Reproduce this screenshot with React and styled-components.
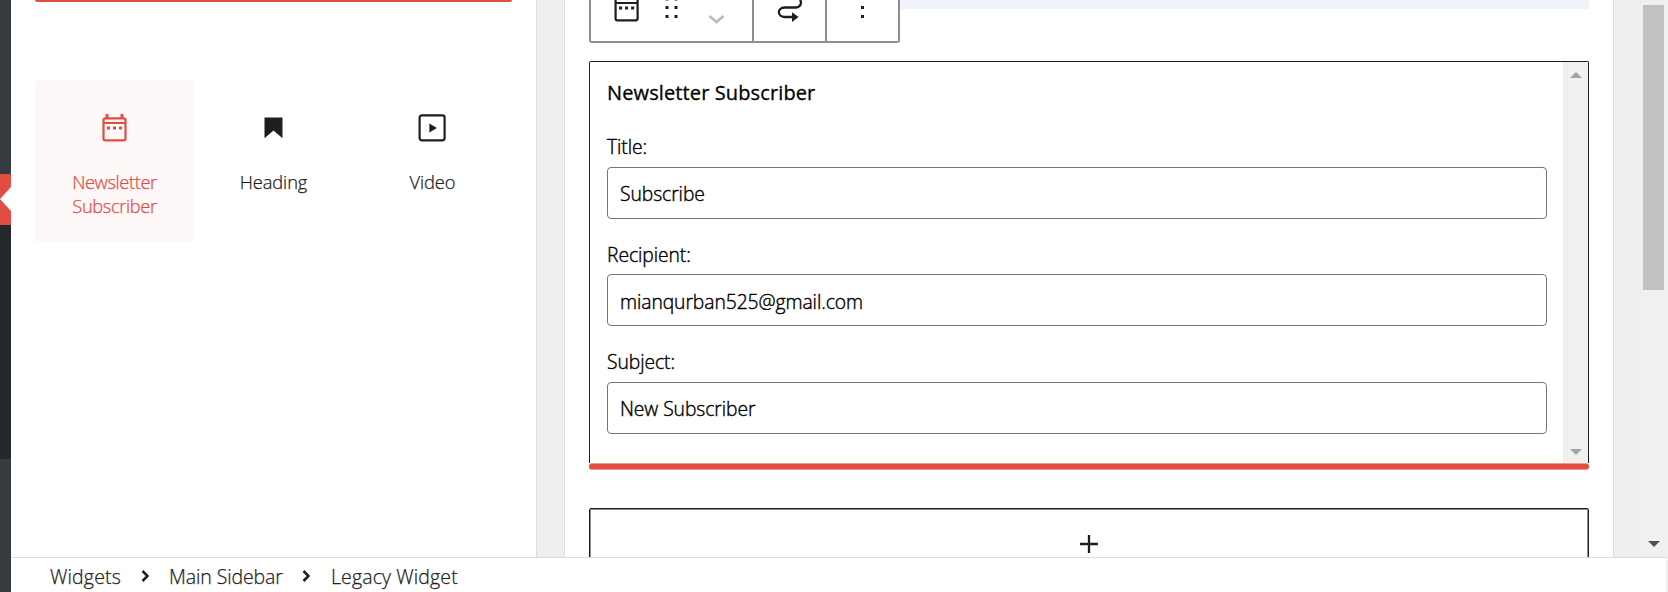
import React from "react";
import styled, { createGlobalStyle, ThemeProvider } from "styled-components";

const theme = {
  accent: "#e14d43",
  ink: "#1e1e1e",
  line: "#dddddd",
  canvas: "#efefef",
  track: "#f0f0f0",
};

const GlobalStyle = createGlobalStyle`
  *, *::before, *::after { box-sizing: border-box; }
  body {
    margin: 0;
    overflow: hidden;
    background: #fff;
    font-family: "Open Sans", "Noto Sans", sans-serif;
  }
  svg { display: block; flex: none; }
`;

const Page = styled.div`
  display: flex;
  width: 1668px;
  height: 592px;
  overflow: hidden;
  color: ${({ theme }) => theme.ink};
`;

const AdminRail = styled.nav`
  display: flex;
  flex-direction: column;
  flex: none;
  width: 11px;
  background: #363b3f;
`;

const RailCurrent = styled.div`
  display: flex;
  align-items: center;
  height: 51px;
  margin-top: 174px;
  background: ${({ theme }) => theme.accent};
`;

const RailNotch = styled.span`
  width: 0;
  height: 0;
  margin-top: -2px;
  border: 12px solid transparent;
  border-left: 0;
  border-right: 11px solid #fff;
`;

const RailSubmenu = styled.div`
  height: 234px;
  background: #25282b;
`;

const Shell = styled.div`
  display: flex;
  flex-direction: column;
  flex: 1;
  min-width: 0;
`;

const Workspace = styled.div`
  display: flex;
  height: 557px;
  overflow: hidden;
  background: ${({ theme }) => theme.canvas};
`;

const Inserter = styled.aside`
  flex: none;
  width: 526px;
  padding: 0 24px;
  background: #fff;
  border-right: 1px solid ${({ theme }) => theme.line};
`;

const SearchEdge = styled.div`
  width: 477px;
  height: 2px;
  background: ${({ theme }) => theme.accent};
  border-radius: 0 0 3px 3px;
`;

const BlockGrid = styled.div`
  display: grid;
  grid-template-columns: repeat(3, 159px);
  margin-top: 78px;
`;

const BlockTile = styled.div`
  display: flex;
  flex-direction: column;
  align-items: center;
  height: 162px;
  padding-top: 30px;
  border-radius: 3px;
  color: ${({ $active, theme }) => ($active ? theme.accent : theme.ink)};
  background: ${({ $active }) => ($active ? "#fef8f8" : "transparent")};
`;

const TileLabel = styled.span`
  width: 110px;
  margin-top: 24px;
  font-size: 18.3px;
  font-weight: 300;
  line-height: 24px;
  text-align: center;
  letter-spacing: ${({ $tracking = 0 }) => $tracking}px;
  -webkit-text-stroke: 0.25px currentColor;
`;

const Editor = styled.main`
  flex: none;
  width: 1050px;
  margin-left: 27px;
  padding: 0 24px;
  background: #fff;
  border: solid ${({ theme }) => theme.line};
  border-width: 0 1px;
`;

const EditorHead = styled.div`
  display: flex;
  height: 44px;
`;

const Toolbar = styled.div`
  display: flex;
  width: 311px;
  height: 43px;
  border: 2px solid #8e8e8e;
  border-top: 0;
  border-radius: 0 0 3px 3px;
`;

const ToolGroup = styled.div`
  width: ${({ $width }) => $width}px;
  height: 43px;
  border-right: ${({ $last }) => ($last ? "0" : "2px solid #8e8e8e")};
`;

const AreaHeader = styled.div`
  flex: 1;
  height: 9px;
  background: #f0f4fa;
`;

const WidgetBox = styled.section`
  display: flex;
  height: 402px;
  margin-top: 17px;
  border: 1px solid ${({ theme }) => theme.ink};
  border-bottom: 0;
  border-radius: 2px 2px 0 0;
`;

const WidgetForm = styled.div`
  flex: 1;
  padding: 17px 16px 0 17px;
  color: #000;
`;

const WidgetTitle = styled.h3`
  margin: 0 0 26.9px;
  font-size: 20px;
  font-weight: 400;
  line-height: 28px;
  letter-spacing: 0.12px;
  -webkit-text-stroke: 0.3px currentColor;
`;

const Field = styled.label`
  display: flex;
  flex-direction: column;
  gap: 6.8px;
  margin-bottom: 22.5px;
  padding-top: 0.2px;
  font-size: 19.3px;
  font-weight: 300;
  line-height: 26px;
  letter-spacing: -0.07px;
  -webkit-text-stroke: 0.4px currentColor;
`;

const TextInput = styled.input`
  width: 940px;
  height: 52px;
  padding: 2px 12px 0;
  color: #000;
  background: #fff;
  border: 1px solid #757575;
  border-radius: 4px;
  outline: 0;
  font: inherit;
  letter-spacing: inherit;
  -webkit-text-stroke: inherit;
`;

const InnerScroll = styled.div`
  display: flex;
  flex-direction: column;
  justify-content: space-between;
  align-items: center;
  width: 25px;
  padding: 10px 0 8px;
  background: ${({ theme }) => theme.track};
`;

const ScrollArrow = styled.span`
  width: 0;
  height: 0;
  border: 0 solid transparent;
  border-width: ${({ $up }) => ($up ? "0 6px 6px" : "6px 6px 0")};
  border-${({ $up }) => ($up ? "bottom" : "top")}-color: ${({ $color }) => $color};
`;

const DropLine = styled.div`
  height: 7px;
  background: ${({ theme }) => theme.accent};
  border: solid #eb9a94;
  border-width: 1px 0;
  border-radius: 3px;
`;

const Appender = styled.div`
  display: flex;
  justify-content: center;
  height: 80px;
  margin-top: 38px;
  padding-top: 25px;
  border: 1px solid ${({ theme }) => theme.ink};
  border-radius: 2px;
  box-shadow: inset 0 0 0 1px #8e8e8e;
`;

const PageScroll = styled.div`
  display: flex;
  flex-direction: column;
  justify-content: space-between;
  align-items: center;
  width: 27px;
  margin-left: auto;
  padding: 5px 2px 10px 0;
  background: ${({ theme }) => theme.track};
`;

const PageThumb = styled.div`
  width: 21px;
  height: 285px;
  background: #c1c1c1;
`;

const Breadcrumb = styled.footer`
  display: flex;
  align-items: center;
  flex: 1;
  padding-left: 39px;
  padding-top: 4px;
  background: #fff;
  border-top: 1px solid ${({ theme }) => theme.line};
  border-right: 2px solid ${({ theme }) => theme.track};
`;

const Crumb = styled.span`
  width: ${({ $width }) => $width}px;
  font-size: 19.5px;
  font-weight: 300;
  line-height: 26px;
  white-space: nowrap;
  letter-spacing: ${({ $tracking = 0 }) => $tracking}px;
  -webkit-text-stroke: 0.25px currentColor;
`;

const CalendarGlyph = () => (
  <>
    <rect x="7" y="8.3" width="22" height="22" rx="1.8" fill="none" stroke="currentColor" strokeWidth="2.2" />
    <path d="M7 12h22v2H7zM9 4h3v4H9zM24 4h3v4h-3z" fill="currentColor" />
    <path d="M10.5 16.5h3v3h-3zM16.5 16.5h3v3h-3zM22.5 16.5h3v3h-3z" fill="currentColor" />
  </>
);

const CalendarIcon = () => (
  <svg width="36" height="36" viewBox="0.5 0 36 36">
    <CalendarGlyph />
  </svg>
);

const HeadingIcon = () => (
  <svg width="36" height="36" viewBox="0 0 36 36">
    <path d="M8.5 7.4h18v20.8l-9-7.8-9 7.8z" fill="currentColor" />
  </svg>
);

const VideoIcon = () => (
  <svg width="36" height="36" viewBox="0.4 0 36 36">
    <rect x="5" y="5.3" width="25" height="25" rx="2.3" fill="none" stroke="currentColor" strokeWidth="2.2" />
    <path d="M14.8 13.4v9l7.5-4.5z" fill="currentColor" />
  </svg>
);

const BlockTools = () => (
  <svg width="161" height="41" viewBox="591 0 161 41">
    <g transform="translate(608.6 -10)">
      <CalendarGlyph />
    </g>
    <path
      d="M665.5 6h3v3h-3zM674.5 6h3v3h-3zM665.5 15h3v3h-3zM674.5 15h3v3h-3zM665.5-2.6h3v3h-3zM674.5-2.6h3v3h-3z"
      fill="currentColor"
    />
    <path d="M709.5 16l7 6 7-6" fill="none" stroke="#bbb" strokeWidth="2.6" />
  </svg>
);

const MoveIcon = () => (
  <svg width="71" height="41" viewBox="754 0 71 41">
    <path
      d="M794-3C803-3 803 7.5 795.5 7.5H784.5C777 7.5 777 17 784.5 17H793"
      fill="none"
      stroke="currentColor"
      strokeWidth="2.3"
    />
    <path d="M792 12.2v9.8l6.6-4.9z" fill="currentColor" />
  </svg>
);

const MoreIcon = () => (
  <svg width="71" height="41" viewBox="827 0 71 41">
    <path d="M861 6h3v3h-3zM861 15h3v3h-3z" fill="currentColor" />
  </svg>
);

const PlusIcon = () => (
  <svg width="20" height="20" viewBox="0.5 0 20 20">
    <path d="M10.5 1v18M1.5 10h18" stroke="currentColor" strokeWidth="2.3" />
  </svg>
);

const CrumbChevron = styled.svg.attrs({ width: 8, height: 14, viewBox: "0 0 8 14" })`
  margin: ${({ $gap }) => $gap};
  fill: none;
  stroke: currentColor;
  stroke-width: 2.5;
`;

const blocks = [
  { label: "Newsletter Subscriber", Icon: CalendarIcon, active: true, tracking: -0.38 },
  { label: "Heading", Icon: HeadingIcon, tracking: -0.1 },
  { label: "Video", Icon: VideoIcon, tracking: -0.1 },
];

const fields = [
  { label: "Title:", value: "Subscribe" },
  { label: "Recipient:", value: "mianqurban525@gmail.com" },
  { label: "Subject:", value: "New Subscriber" },
];

export default function App() {
  return (
    <ThemeProvider theme={theme}>
      <GlobalStyle />
      <Page>
        <AdminRail>
          <RailCurrent>
            <RailNotch />
          </RailCurrent>
          <RailSubmenu />
        </AdminRail>
        <Shell>
          <Workspace>
            <Inserter>
              <SearchEdge />
              <BlockGrid>
                {blocks.map(({ label, Icon, active, tracking }) => (
                  <BlockTile key={label} $active={active}>
                    <Icon />
                    <TileLabel $tracking={tracking}>{label}</TileLabel>
                  </BlockTile>
                ))}
              </BlockGrid>
            </Inserter>
            <Editor>
              <EditorHead>
                <Toolbar>
                  <ToolGroup $width={163}>
                    <BlockTools />
                  </ToolGroup>
                  <ToolGroup $width={73}>
                    <MoveIcon />
                  </ToolGroup>
                  <ToolGroup $width={71} $last>
                    <MoreIcon />
                  </ToolGroup>
                </Toolbar>
                <AreaHeader />
              </EditorHead>
              <WidgetBox>
                <WidgetForm>
                  <WidgetTitle>Newsletter Subscriber</WidgetTitle>
                  {fields.map(({ label, value }) => (
                    <Field key={label}>
                      {label}
                      <TextInput defaultValue={value} />
                    </Field>
                  ))}
                </WidgetForm>
                <InnerScroll>
                  <ScrollArrow $up $color="#a3a3a3" />
                  <ScrollArrow $color="#a3a3a3" />
                </InnerScroll>
              </WidgetBox>
              <DropLine />
              <Appender>
                <PlusIcon />
              </Appender>
            </Editor>
            <PageScroll>
              <PageThumb />
              <ScrollArrow $color="#505050" />
            </PageScroll>
          </Workspace>
          <Breadcrumb>
            <Crumb $width={72} $tracking={0.15}>
              Widgets
            </Crumb>
            <CrumbChevron $gap="0 20px 2px 19px">
              <path d="M1.5 2l5 5-5 5" />
            </CrumbChevron>
            <Crumb $width={115} $tracking={-0.1}>
              Main Sidebar
            </Crumb>
            <CrumbChevron $gap="0 21px 2px 18px">
              <path d="M1.5 2l5 5-5 5" />
            </CrumbChevron>
            <Crumb $width={130} $tracking={0.12}>
              Legacy Widget
            </Crumb>
          </Breadcrumb>
        </Shell>
      </Page>
    </ThemeProvider>
  );
}
